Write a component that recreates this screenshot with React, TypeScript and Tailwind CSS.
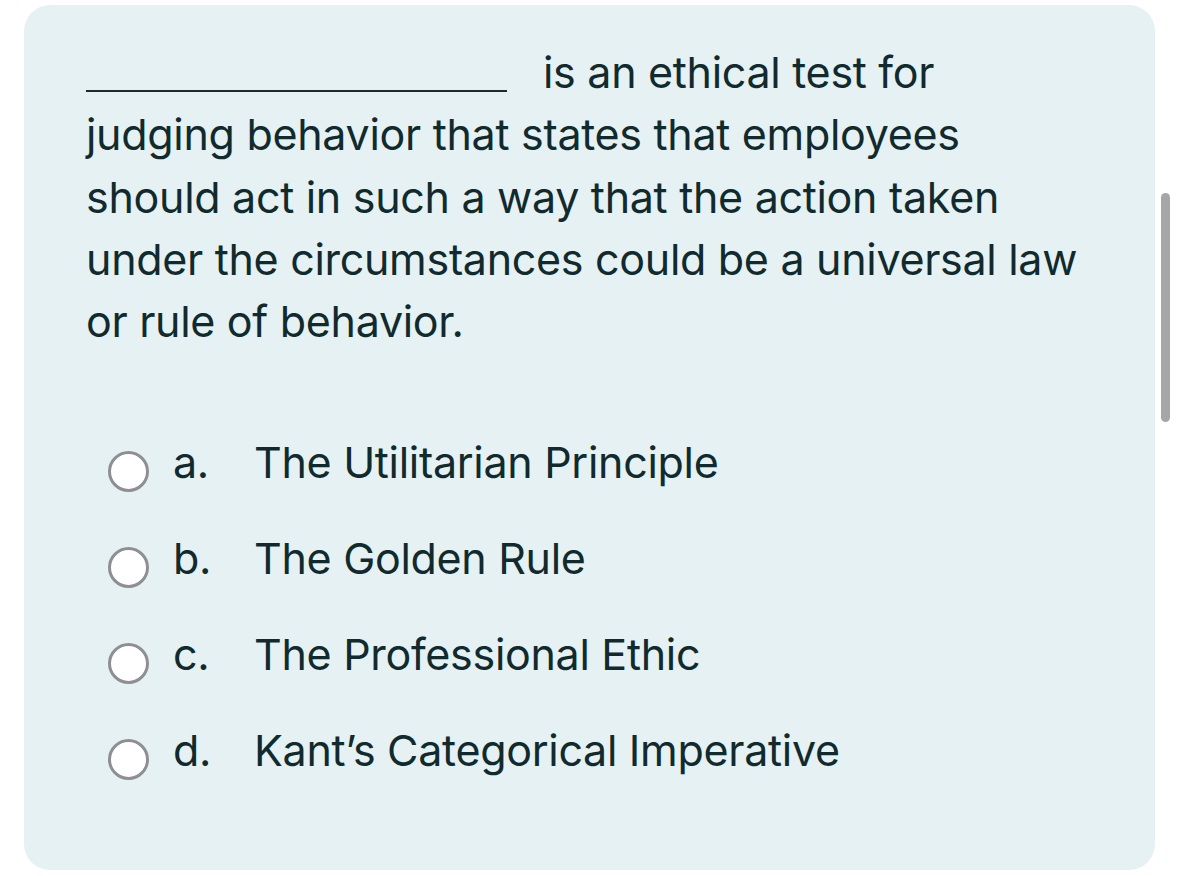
const options = [
  { letter: "a.", text: "The Utilitarian Principle" },
  { letter: "b.", text: "The Golden Rule" },
  { letter: "c.", text: "The Professional Ethic" },
  { letter: "d.", text: "Kant’s Categorical Imperative" },
];

export default function App() {
  return (
    <div className="w-[1179px] h-[876px] bg-white flex font-['Inter',sans-serif] text-[#112a2e]">
      <div className="mt-[5px] ml-[24px] w-[1131px] h-[865px] rounded-[26px] bg-[#e5f1f3] pl-[62px] pr-[40px] pt-[36px]">
        <p className="text-[43px] leading-[62.3px] tracking-[-0.3px]">
          <span className="inline-block w-[421px] h-[2px] bg-[#1b2b2e] align-[-4px] mr-[36px]" />
          is an ethical test for
          <br />
          judging behavior that states that employees
          <br />
          should act in such a way that the action taken
          <br />
          under the circumstances could be a universal law
          <br />
          or rule of behavior.
        </p>

        <div className="mt-[84px] flex flex-col gap-[44px]">
          {options.map((o) => (
            <div key={o.letter} className="flex items-start h-[52px] text-[43px] leading-[52px] tracking-[-0.3px]">
              <div className="mt-[15px] ml-[22px] w-[41px] h-[41px] rounded-full border-[3px] border-[#8e8e93] bg-white shrink-0" />
              <span className="ml-[24px] w-[81px]">{o.letter}</span>
              <span>{o.text}</span>
            </div>
          ))}
        </div>
      </div>
      <div className="ml-[6px] mt-[193px] w-[9px] h-[229px] rounded-full bg-[#a6a6a6]" />
    </div>
  );
}
